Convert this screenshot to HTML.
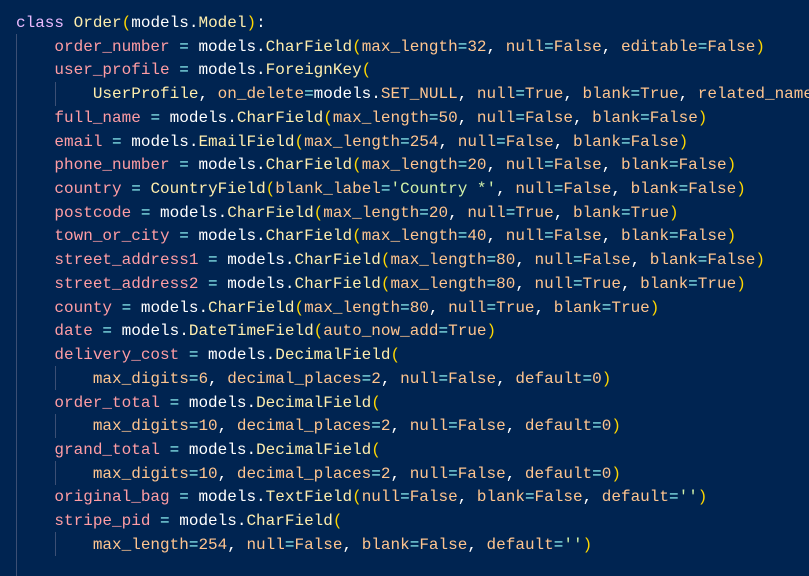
<!DOCTYPE html>
<html><head><meta charset="utf-8"><style>
html,body{margin:0;padding:0;background:#002451;width:809px;height:576px;overflow:hidden}
pre{margin:0;position:absolute;left:16px;top:12px;font-family:"Liberation Mono",monospace;font-size:16px;line-height:23.72px;color:#ffffff;white-space:pre}
.k{color:#ebbbff}.c{color:#ffeead}.p{color:#ffd700}.v{color:#ff9da4}.o{color:#99ffff}.a{color:#ffc58f}.s{color:#d1f1a9}
.g{position:absolute;width:1px;background:#3c4f74}
</style></head><body>
<div class="g" style="left:16px;top:34px;height:542px"></div>
<div class="g" style="left:55px;top:82px;height:24px"></div>
<div class="g" style="left:55px;top:366px;height:24px"></div>
<div class="g" style="left:55px;top:414px;height:24px"></div>
<div class="g" style="left:55px;top:461px;height:24px"></div>
<div class="g" style="left:55px;top:532px;height:24px"></div>
<pre><span class="k">class</span> <span class="c">Order</span><span class="p">(</span>models.<span class="c">Model</span><span class="p">)</span>:
    <span class="v">order_number</span> <span class="o">=</span> models.<span class="c">CharField</span><span class="p">(</span><span class="a">max_length</span><span class="o">=</span><span class="a">32</span>, <span class="a">null</span><span class="o">=</span><span class="a">False</span>, <span class="a">editable</span><span class="o">=</span><span class="a">False</span><span class="p">)</span>
    <span class="v">user_profile</span> <span class="o">=</span> models.<span class="c">ForeignKey</span><span class="p">(</span>
        <span class="c">UserProfile</span>, <span class="a">on_delete</span><span class="o">=</span>models.<span class="a">SET_NULL</span>, <span class="a">null</span><span class="o">=</span><span class="a">True</span>, <span class="a">blank</span><span class="o">=</span><span class="a">True</span>, <span class="a">related_name</span>
    <span class="v">full_name</span> <span class="o">=</span> models.<span class="c">CharField</span><span class="p">(</span><span class="a">max_length</span><span class="o">=</span><span class="a">50</span>, <span class="a">null</span><span class="o">=</span><span class="a">False</span>, <span class="a">blank</span><span class="o">=</span><span class="a">False</span><span class="p">)</span>
    <span class="v">email</span> <span class="o">=</span> models.<span class="c">EmailField</span><span class="p">(</span><span class="a">max_length</span><span class="o">=</span><span class="a">254</span>, <span class="a">null</span><span class="o">=</span><span class="a">False</span>, <span class="a">blank</span><span class="o">=</span><span class="a">False</span><span class="p">)</span>
    <span class="v">phone_number</span> <span class="o">=</span> models.<span class="c">CharField</span><span class="p">(</span><span class="a">max_length</span><span class="o">=</span><span class="a">20</span>, <span class="a">null</span><span class="o">=</span><span class="a">False</span>, <span class="a">blank</span><span class="o">=</span><span class="a">False</span><span class="p">)</span>
    <span class="v">country</span> <span class="o">=</span> <span class="c">CountryField</span><span class="p">(</span><span class="a">blank_label</span><span class="o">=</span><span class="s">'Country *'</span>, <span class="a">null</span><span class="o">=</span><span class="a">False</span>, <span class="a">blank</span><span class="o">=</span><span class="a">False</span><span class="p">)</span>
    <span class="v">postcode</span> <span class="o">=</span> models.<span class="c">CharField</span><span class="p">(</span><span class="a">max_length</span><span class="o">=</span><span class="a">20</span>, <span class="a">null</span><span class="o">=</span><span class="a">True</span>, <span class="a">blank</span><span class="o">=</span><span class="a">True</span><span class="p">)</span>
    <span class="v">town_or_city</span> <span class="o">=</span> models.<span class="c">CharField</span><span class="p">(</span><span class="a">max_length</span><span class="o">=</span><span class="a">40</span>, <span class="a">null</span><span class="o">=</span><span class="a">False</span>, <span class="a">blank</span><span class="o">=</span><span class="a">False</span><span class="p">)</span>
    <span class="v">street_address1</span> <span class="o">=</span> models.<span class="c">CharField</span><span class="p">(</span><span class="a">max_length</span><span class="o">=</span><span class="a">80</span>, <span class="a">null</span><span class="o">=</span><span class="a">False</span>, <span class="a">blank</span><span class="o">=</span><span class="a">False</span><span class="p">)</span>
    <span class="v">street_address2</span> <span class="o">=</span> models.<span class="c">CharField</span><span class="p">(</span><span class="a">max_length</span><span class="o">=</span><span class="a">80</span>, <span class="a">null</span><span class="o">=</span><span class="a">True</span>, <span class="a">blank</span><span class="o">=</span><span class="a">True</span><span class="p">)</span>
    <span class="v">county</span> <span class="o">=</span> models.<span class="c">CharField</span><span class="p">(</span><span class="a">max_length</span><span class="o">=</span><span class="a">80</span>, <span class="a">null</span><span class="o">=</span><span class="a">True</span>, <span class="a">blank</span><span class="o">=</span><span class="a">True</span><span class="p">)</span>
    <span class="v">date</span> <span class="o">=</span> models.<span class="c">DateTimeField</span><span class="p">(</span><span class="a">auto_now_add</span><span class="o">=</span><span class="a">True</span><span class="p">)</span>
    <span class="v">delivery_cost</span> <span class="o">=</span> models.<span class="c">DecimalField</span><span class="p">(</span>
        <span class="a">max_digits</span><span class="o">=</span><span class="a">6</span>, <span class="a">decimal_places</span><span class="o">=</span><span class="a">2</span>, <span class="a">null</span><span class="o">=</span><span class="a">False</span>, <span class="a">default</span><span class="o">=</span><span class="a">0</span><span class="p">)</span>
    <span class="v">order_total</span> <span class="o">=</span> models.<span class="c">DecimalField</span><span class="p">(</span>
        <span class="a">max_digits</span><span class="o">=</span><span class="a">10</span>, <span class="a">decimal_places</span><span class="o">=</span><span class="a">2</span>, <span class="a">null</span><span class="o">=</span><span class="a">False</span>, <span class="a">default</span><span class="o">=</span><span class="a">0</span><span class="p">)</span>
    <span class="v">grand_total</span> <span class="o">=</span> models.<span class="c">DecimalField</span><span class="p">(</span>
        <span class="a">max_digits</span><span class="o">=</span><span class="a">10</span>, <span class="a">decimal_places</span><span class="o">=</span><span class="a">2</span>, <span class="a">null</span><span class="o">=</span><span class="a">False</span>, <span class="a">default</span><span class="o">=</span><span class="a">0</span><span class="p">)</span>
    <span class="v">original_bag</span> <span class="o">=</span> models.<span class="c">TextField</span><span class="p">(</span><span class="a">null</span><span class="o">=</span><span class="a">False</span>, <span class="a">blank</span><span class="o">=</span><span class="a">False</span>, <span class="a">default</span><span class="o">=</span><span class="s">''</span><span class="p">)</span>
    <span class="v">stripe_pid</span> <span class="o">=</span> models.<span class="c">CharField</span><span class="p">(</span>
        <span class="a">max_length</span><span class="o">=</span><span class="a">254</span>, <span class="a">null</span><span class="o">=</span><span class="a">False</span>, <span class="a">blank</span><span class="o">=</span><span class="a">False</span>, <span class="a">default</span><span class="o">=</span><span class="s">''</span><span class="p">)</span>
</pre>
</body></html>
